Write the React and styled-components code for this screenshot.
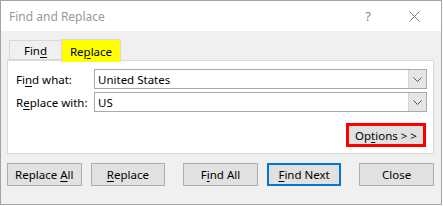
import styled, { createGlobalStyle } from 'styled-components';

const Global = createGlobalStyle`
  body {
    margin: 0;
    background: #ffffff;
    font-family: "Noto Sans", "Open Sans", sans-serif;
    font-size: 11.5px;
  }
`;

const Win = styled.div`
  width: 442px;
  height: 205px;
  box-sizing: border-box;
  border: 1px solid #a3a3a3;
  background: #f0f0f0;
  display: flex;
  flex-direction: column;
`;

const TitleBar = styled.div`
  height: 30px;
  background: #ffffff;
  display: flex;
  align-items: center;
  padding-left: 8px;
  color: #999999;
  font-size: 12px;
`;
const Title = styled.span`
  flex: 1;
  margin-top: 1px;
`;
const Help = styled.span`
  width: 18px;
  text-align: center;
  font-size: 13px;
  color: #8a8a8a;
  margin-right: 22px;
`;
const CloseX = styled.span`
  width: 30px;
  display: flex;
  justify-content: center;
  margin-right: 12px;
`;

const Body = styled.div`
  flex: 1;
  display: flex;
  flex-direction: column;
  padding: 0 7px 0 6px;
`;

const TabRow = styled.div`
  height: 29px;
  display: flex;
  align-items: flex-end;
  padding-left: 2px;
`;
const Tab = styled.div`
  box-sizing: border-box;
  height: ${p => (p.active ? '23px' : '20px')};
  margin-bottom: ${p => (p.active ? '-2px' : '0')};
  width: ${p => p.w}px;
  display: flex;
  align-items: center;
  justify-content: center;
  background: ${p => (p.active ? '#ffff00' : 'transparent')};
  border: 1px solid #d9d9d9;
  border-bottom: ${p => (p.active ? 'none' : '1px solid #d9d9d9')};
  border-right: ${p => (p.active ? '1px solid #d9d9d9' : 'none')};
  color: #000;
  padding-top: ${p => (p.active ? '0' : '1px')};
  position: relative;
  z-index: ${p => (p.active ? 1 : 0)};
`;

const Panel = styled.div`
  box-sizing: border-box;
  height: 94px;
  background: #ffffff;
  border: 1px solid #d9d9d9;
  padding: 8px 6px 0 8px;
  display: flex;
  flex-direction: column;
`;
const Row = styled.div`
  display: flex;
  align-items: center;
  height: 20px;
  margin-bottom: 3px;
`;
const Label = styled.span`
  width: 78px;
  color: #000;
`;
const Combo = styled.div`
  flex: 1;
  height: 20px;
  box-sizing: border-box;
  border: 1px solid #a9a9a9;
  display: flex;
  align-items: stretch;
`;
const ComboText = styled.span`
  flex: 1;
  padding-left: 3px;
  display: flex;
  align-items: center;
  color: #000;
`;
const Drop = styled.span`
  width: 17px;
  background: #e6e6e6;
  border-left: 1px solid #d4d4d4;
  display: flex;
  align-items: center;
  justify-content: center;
`;
const OptRow = styled.div`
  display: flex;
  justify-content: flex-end;
  margin-top: 8px;
  padding-right: 1px;
`;
const OptBtn = styled.div`
  box-sizing: border-box;
  width: 80px;
  height: 24px;
  border: 3px solid #ff0000;
  background: #e1e1e1;
  display: flex;
  align-items: center;
  justify-content: center;
  color: #000;
`;

const Buttons = styled.div`
  display: flex;
  margin-top: 9px;
`;
const Btn = styled.div`
  box-sizing: border-box;
  width: 75px;
  height: 23px;
  margin-left: ${p => p.gap}px;
  background: #e1e1e1;
  border: ${p => (p.primary ? '2px solid #0078d7' : '1px solid #adadad')};
  display: flex;
  align-items: center;
  justify-content: center;
  color: #000;
`;

const U = styled.span`
  text-decoration: underline;
  text-underline-offset: 2px;
`;

function Chevron() {
  return (
    <svg width="9" height="5" viewBox="0 0 9 5">
      <polyline points="0.5,0.5 4.5,4.5 8.5,0.5" fill="none" stroke="#555" strokeWidth="1" />
    </svg>
  );
}

export default function App() {
  return (
    <>
      <Global />
      <Win>
        <TitleBar>
          <Title>Find and Replace</Title>
          <Help>?</Help>
          <CloseX>
            <svg width="11" height="11" viewBox="0 0 11 11">
              <path d="M0.5 0.5L10.5 10.5M10.5 0.5L0.5 10.5" stroke="#777" strokeWidth="1" />
            </svg>
          </CloseX>
        </TitleBar>
        <Body>
          <TabRow>
            <Tab w={52}><span>Fin<U>d</U></span></Tab>
            <Tab w={60} active><span>Re<U>p</U>lace</span></Tab>
          </TabRow>
          <Panel>
            <Row>
              <Label>Fi<U>n</U>d what:</Label>
              <Combo>
                <ComboText>United States</ComboText>
                <Drop><Chevron /></Drop>
              </Combo>
            </Row>
            <Row>
              <Label>R<U>e</U>place with:</Label>
              <Combo>
                <ComboText>US</ComboText>
                <Drop><Chevron /></Drop>
              </Combo>
            </Row>
            <OptRow>
              <OptBtn><span>Op<U>t</U>ions &gt; &gt;</span></OptBtn>
            </OptRow>
          </Panel>
          <Buttons>
            <Btn gap={0}><span>Replace <U>A</U>ll</span></Btn>
            <Btn gap={9}><span><U>R</U>eplace</span></Btn>
            <Btn gap={18}><span>F<U>i</U>nd All</span></Btn>
            <Btn gap={9} primary><span><U>F</U>ind Next</span></Btn>
            <Btn gap={18}><span>Close</span></Btn>
          </Buttons>
        </Body>
      </Win>
    </>
  );
}
